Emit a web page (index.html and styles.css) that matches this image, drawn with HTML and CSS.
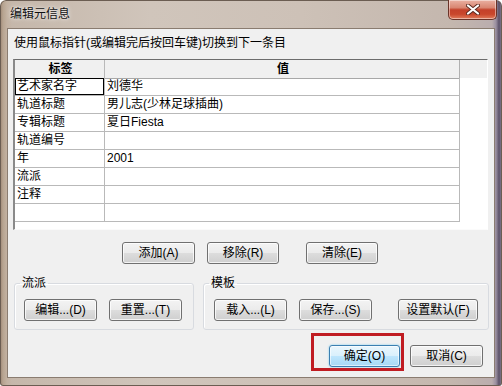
FILE: index.html
```html
<!DOCTYPE html>
<html lang="zh-CN">
<head>
<meta charset="utf-8">
<title>编辑元信息</title>
<link rel="stylesheet" href="styles.css">
</head>
<body>
<div class="window">
  <div class="titlebar">
    <span class="title">编辑元信息</span>
    <div class="close">
      <svg width="14" height="11" viewBox="0 0 14 11">
        <path d="M2 1.5 L12 9.5 M12 1.5 L2 9.5" stroke="#5b2a20" stroke-width="4" stroke-linecap="round"/>
        <path d="M2 1.5 L12 9.5 M12 1.5 L2 9.5" stroke="#ffffff" stroke-width="2.2" stroke-linecap="round"/>
      </svg>
    </div>
  </div>
  <div class="client">
    <div class="hint">使用鼠标指针(或编辑完后按回车键)切换到下一条目</div>
    <div class="listview">
      <div class="grid">
        <div class="cell head">标签</div><div class="cell head">值</div>
        <div class="cell focus">艺术家名字</div><div class="cell">刘德华</div>
        <div class="cell">轨道标题</div><div class="cell">男儿志(少林足球插曲)</div>
        <div class="cell">专辑标题</div><div class="cell">夏日Fiesta</div>
        <div class="cell">轨道编号</div><div class="cell"></div>
        <div class="cell">年</div><div class="cell">2001</div>
        <div class="cell">流派</div><div class="cell"></div>
        <div class="cell">注释</div><div class="cell"></div>
        <div class="cell"></div><div class="cell"></div>
      </div>
    </div>
    <div class="actions">
      <button class="btn w73">添加(A)</button>
      <button class="btn w72 g12">移除(R)</button>
      <button class="btn w72 g27">清除(E)</button>
    </div>
    <div class="groups">
      <fieldset class="group g1">
        <legend>流派</legend>
        <div class="group-row">
          <button class="btn w73">编辑...(D)</button>
          <button class="btn w73 g12">重置...(T)</button>
        </div>
      </fieldset>
      <fieldset class="group g2">
        <legend>模板</legend>
        <div class="group-row">
          <button class="btn w73">载入...(L)</button>
          <button class="btn w73 g12">保存...(S)</button>
          <button class="btn w80 g26">设置默认(F)</button>
        </div>
      </fieldset>
    </div>
    <div class="footer">
      <button class="btn default w71">确定(O)</button>
      <button class="btn w73 g10">取消(C)</button>
    </div>
  </div>
  <div class="highlight"></div>
</div>
</body>
</html>
```
FILE: styles.css
```css
* { box-sizing: border-box; }
html, body { margin: 0; padding: 0; background: #ffffff; }
body {
  font-family: "Liberation Sans", "Noto Sans CJK SC", sans-serif;
  font-size: 12px;
  color: #000;
}
.window {
  position: relative;
  width: 502px;
  height: 386px;
  overflow: hidden;
  border-radius: 6px 6px 3px 3px;
  background:
    linear-gradient(to right, #9c8573 0, #b7a491 3px, #c3b2a2 7px, rgba(0,0,0,0) 12px),
    linear-gradient(to left, #8e849a 0, #5b5168 3px, #9a8fa0 6px, rgba(0,0,0,0) 10px),
    linear-gradient(to right, #c4b6a9, #d0c5bb 30%, #cdc1b7 60%, #c4b7ae 90%, #b8abae);
  box-shadow: inset 0 0 0 1px #6b5d52;
}
.titlebar {
  height: 28px;
  display: flex;
  justify-content: space-between;
  align-items: flex-start;
}
.title {
  margin: 7px 0 0 10px;
  line-height: 14px;
  color: #111;
  text-shadow: 0 0 5px rgba(255,255,255,0.9), 0 0 2px rgba(255,255,255,0.7);
}
.close {
  width: 49px;
  height: 20px;
  margin-right: 5px;
  border: 1px solid #6a3328;
  border-top: none;
  border-radius: 0 0 5px 5px;
  background: linear-gradient(#eab0a2 0, #d98672 40%, #c4412a 52%, #c9472c 75%, #e07c5c 100%);
  box-shadow: inset 0 0 0 1px rgba(255,255,255,0.45);
  display: flex;
  align-items: center;
  justify-content: center;
}
.client {
  margin-left: 7px;
  width: 488px;
  height: 350px;
  border: 1px solid #8a7c70;
  background: #f0f0f0;
  display: flex;
  flex-direction: column;
}
.hint {
  margin: 7px 0 0 6px;
  line-height: 14px;
  height: 14px;
  white-space: nowrap;
}
.listview {
  margin: 9px 0 0 5px;
  width: 475px;
  height: 171px;
  border-top: 1px solid #6c6c6c;
  border-left: 2px solid #8a8a8a;
  border-right: 1px solid #ffffff;
  border-bottom: 1px solid #fbfbfb;
  background: linear-gradient(#f0f0f0 0, #f0f0f0 18px, #ffffff 18px);
}
.grid {
  width: 445px;
  display: grid;
  grid-template-columns: 90px 355px;
  grid-auto-rows: 18px;
}
.cell {
  border-right: 1px solid #b9b9b9;
  border-bottom: 1px solid #b9b9b9;
  padding-left: 2px;
  line-height: 17px;
  white-space: nowrap;
  overflow: hidden;
}
.cell.head {
  height: 19px;
  line-height: 18px;
  font-weight: bold;
  text-align: center;
  border-bottom-color: #a8a8a8;
}
.grid .cell:nth-child(2) { border-right-color: #b0b0b0; }
.cell.focus { box-shadow: inset 0 0 0 1px #000; }
.btn {
  height: 22px;
  padding: 0;
  border: 1px solid #707070;
  border-radius: 3px;
  background: linear-gradient(#f3f3f3 0, #ebebeb 50%, #dddddd 50%, #cfcfcf 100%);
  box-shadow: inset 0 0 0 1px rgba(255,255,255,0.75);
  font-family: "Liberation Sans", "Noto Sans CJK SC", sans-serif;
  font-size: 12px;
  color: #000;
  line-height: 20px;
  text-align: center;
  white-space: nowrap;
}
.btn.default {
  border-color: #3c7fb1;
  background: linear-gradient(#eaf6fd 0, #d9f0fc 50%, #bee6fd 50%, #a7d9f5 100%);
  box-shadow: inset 0 0 0 1px rgba(255,255,255,0.6), 0 0 2px #6cc8f0;
}
.w71 { width: 71px; }
.w72 { width: 72px; }
.w73 { width: 73px; }
.w80 { width: 80px; }
.g10 { margin-left: 10px; }
.g12 { margin-left: 12px; }
.g26 { margin-left: 26px; }
.g27 { margin-left: 27px; }
.actions {
  display: flex;
  margin-top: 12px;
  padding-left: 114px;
}
.groups {
  display: flex;
  margin-top: 13px;
  padding-left: 6px;
}
.group {
  margin: 0;
  height: 53px;
  padding: 9px 9px 8px 9px;
  border: 1px solid #d8dbe0;
  border-radius: 3px;
  box-shadow: inset 1px 1px 0 #ffffff;
}
.group legend {
  margin-left: -4px;
  padding: 0 2px;
  line-height: 13px;
  height: 13px;
}
.g1 { width: 180px; }
.g2 { width: 286px; margin-left: 9px; padding-left: 10px; }
.g2 legend { margin-left: -5px; }
.group-row { display: flex; }
.footer {
  display: flex;
  justify-content: flex-end;
  margin-top: 15px;
  padding-right: 11px;
}
.highlight {
  position: absolute;
  left: 311px;
  top: 333px;
  width: 93px;
  height: 38px;
  border: 3px solid #c01c22;
}
```
